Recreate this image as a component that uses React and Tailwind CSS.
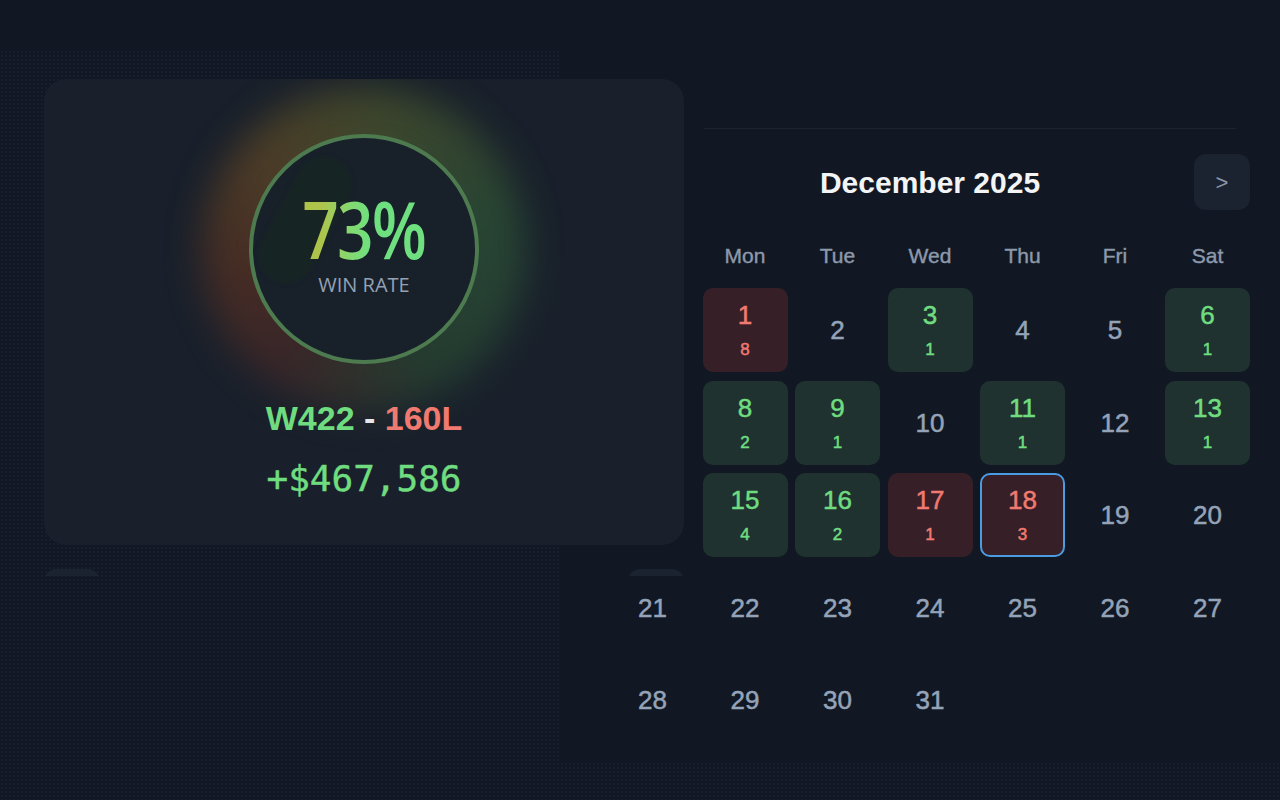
import React from "react";

const wins = { 3: 1, 6: 1, 8: 2, 9: 1, 11: 1, 13: 1, 15: 4, 16: 2 };
const losses = { 1: 8, 17: 1, 18: 3 };
const weekdays = ["Sun", "Mon", "Tue", "Wed", "Thu", "Fri", "Sat"];

// December 2025 starts on a Monday
const cells = [null, ...Array.from({ length: 31 }, (_, i) => i + 1), null, null, null];

function DayCell({ day }) {
  if (!day) return <div className="h-[84px]" />;
  const w = wins[day];
  const l = losses[day];
  if (w || l) {
    return (
      <div
        className={`flex h-[84px] flex-col items-center justify-center rounded-[10px] [-webkit-text-stroke:0.5px_currentColor] ${
          w ? "bg-[#1f322f] text-[#6fdc80]" : "bg-[#361f27] text-[#f07a70]"
        } ${day === 18 ? "border-2 border-[#4b9be0]" : ""}`}
      >
        <span className="text-[26px] leading-none">{day}</span>
        <span className="mt-[13px] text-[17px] leading-none">{w || l}</span>
      </div>
    );
  }
  return (
    <div className="flex h-[84px] items-center justify-center text-[26px] leading-none text-[#94a3b8] [-webkit-text-stroke:0.5px_currentColor]">
      {day}
    </div>
  );
}

function WinRateCard() {
  return (
    <div className="relative mt-[29px] flex h-[466px] flex-col items-center overflow-hidden rounded-[22px] bg-[#19202b] pt-[55px]">
      <div className="absolute left-[158px] top-[8px] h-[324px] w-[324px] rounded-full bg-[conic-gradient(from_0deg,#4c532c,#2d5237_22%,#284532_42%,#452828_60%,#553022_72%,#5d4526_86%,#4c532c)] opacity-75 blur-[18px]" />
      <div className="relative h-[230px] w-[230px] overflow-hidden rounded-full border-4 border-[#4d7a4e] bg-[#18202a]">
        <div className="absolute left-[24px] top-[14px] h-[136px] w-[56px] rotate-[28deg] rounded-full bg-[#172624] opacity-90 blur-[2px]" />
        <div className="relative flex flex-col items-center pt-[58px] font-['Open_Sans',sans-serif]">
          <span className="inline-block scale-x-[0.8] bg-linear-to-r from-[#aec34a] from-15% via-[#86d86f] via-38% to-[#6ee07f] to-55% bg-clip-text text-[80px] font-semibold leading-[64px] tracking-[-0.03em] text-transparent">
            73%
          </span>
          <span className="mt-[15px] text-[20px] leading-none text-[#94a0b4]">WIN RATE</span>
        </div>
      </div>
      <div className="relative mt-[34px] font-['Liberation_Sans',Arial,sans-serif] text-[34px] font-bold leading-[40px]">
        <span className="text-[#6fdc80]">W422</span>
        <span className="text-[#e5e7eb]"> - </span>
        <span className="text-[#f07a70]">160L</span>
      </div>
      <div className="relative mt-[20px] font-['DejaVu_Sans_Mono',monospace] text-[36px] leading-[42px] text-[#6fdc80] [-webkit-text-stroke:0.4px_currentColor]">
        +$467,586
      </div>
    </div>
  );
}

function Calendar() {
  return (
    <div className="relative z-0 ml-[-124px] h-[713px] w-[720px] shrink-0 bg-[#111823] pl-[50px] pt-[78px] font-['Liberation_Sans',Arial,sans-serif]">
      <div className="ml-[94px] h-px w-[532px] bg-[#1c2431]" />
      <div className="mt-[25px] flex w-[640px] items-center justify-between">
        <button className="flex h-[56px] w-[56px] items-center justify-center rounded-[12px] bg-[#1c2330] text-[22px] text-[#8a96a8]">
          &lt;
        </button>
        <h2 className="text-[30px] font-bold text-[#f3f4f6]">December 2025</h2>
        <button className="flex h-[56px] w-[56px] items-center justify-center rounded-[12px] bg-[#1c2330] text-[22px] text-[#8a96a8]">
          &gt;
        </button>
      </div>
      <div className="mt-[34px] grid w-[640px] grid-cols-7 gap-x-[7.5px]">
        {weekdays.map((d) => (
          <div
            key={d}
            className="flex h-[24px] items-center justify-center text-[21px] text-[#8d99ab] [-webkit-text-stroke:0.4px_currentColor]"
          >
            {d}
          </div>
        ))}
      </div>
      <div className="mt-[20px] grid w-[640px] grid-cols-7 gap-x-[7.5px] gap-y-[8.5px]">
        {cells.map((d, i) => (
          <DayCell key={i} day={d} />
        ))}
      </div>
    </div>
  );
}

export default function App() {
  return (
    <div className="h-[800px] w-full overflow-hidden bg-[#111823]">
      <div className="mt-[50px] flex h-[750px] bg-[radial-gradient(circle,#172030_1px,transparent_1.3px)] bg-[length:4px_4px] pl-[44px]">
        <div className="relative z-10 flex w-[640px] shrink-0 flex-col">
          <WinRateCard />
          <div className="mt-[24px] flex h-[7px] justify-between overflow-hidden">
            <div className="h-[56px] w-[56px] rounded-[12px] bg-[#1c2330]" />
            <div className="h-[56px] w-[56px] rounded-[12px] bg-[#1c2330]" />
          </div>
        </div>
        <Calendar />
      </div>
    </div>
  );
}
